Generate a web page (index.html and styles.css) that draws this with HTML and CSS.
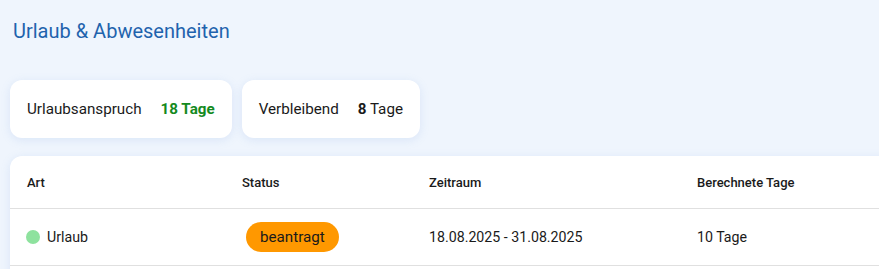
FILE: index.html
```html
<!DOCTYPE html>
<html lang="de">
<head>
<meta charset="utf-8">
<title>Urlaub &amp; Abwesenheiten</title>
<link rel="stylesheet" href="styles.css">
</head>
<body>
<main class="page">
  <h1 class="title">Urlaub &amp; Abwesenheiten</h1>
  <section class="stats">
    <div class="stat-card">
      <span class="stat-label">Urlaubsanspruch</span>
      <span class="stat-value stat-value--green">18 Tage</span>
    </div>
    <div class="stat-card">
      <span class="stat-label">Verbleibend</span>
      <span class="stat-value"><strong>8</strong> Tage</span>
    </div>
  </section>
  <section class="table-card">
    <div class="row row--head">
      <div class="cell">Art</div>
      <div class="cell">Status</div>
      <div class="cell">Zeitraum</div>
      <div class="cell">Berechnete Tage</div>
    </div>
    <div class="row">
      <div class="cell cell--type"><span class="dot"></span>Urlaub</div>
      <div class="cell"><span class="badge">beantragt</span></div>
      <div class="cell">18.08.2025 - 31.08.2025</div>
      <div class="cell">10 Tage</div>
    </div>
    <div class="row row--empty"></div>
  </section>
</main>
</body>
</html>
```

FILE: styles.css
```css
html, body {
  margin: 0;
  padding: 0;
  overflow: hidden;
}
body {
  background: #eff5fd;
  font-family: Roboto, "Liberation Sans", sans-serif;
  color: #1a1a1a;
}
.page {
  padding: 0 0 0 10px;
  width: 1000px;
}
.title {
  margin: 0;
  padding: 19px 0 0 3px;
  height: 80px;
  box-sizing: border-box;
  font-size: 20px;
  font-weight: 400;
  color: #1f63ad;
  line-height: 24px;
}
.stats {
  display: flex;
  gap: 10px;
  margin-bottom: 18px;
}
.stat-card {
  background: #fff;
  border-radius: 12px;
  height: 58px;
  padding: 0 17px;
  display: flex;
  align-items: center;
  gap: 19px;
  font-size: 15.2px;
  box-shadow: 0 2px 10px rgba(120, 160, 220, 0.18);
}
.stat-value strong { font-weight: 700; }
.stat-value--green {
  color: #148a1e;
  font-weight: 700;
}
.table-card {
  background: #fff;
  border-radius: 12px;
  box-shadow: 0 2px 10px rgba(120, 160, 220, 0.18);
}
.row {
  display: grid;
  grid-template-columns: 215px 187px 268px 1fr;
  height: 56px;
  align-items: center;
  border-bottom: 1px solid #e0e0e0;
  font-size: 14.2px;
}
.row--head {
  height: 52px;
  font-weight: 500;
  font-size: 13px;
}
.row--empty {
  border-bottom: 0;
}
.cell {
  padding-left: 17px;
}
.cell--type {
  display: flex;
  align-items: center;
  gap: 7px;
  padding-left: 16px;
}
.dot {
  width: 14px;
  height: 14px;
  border-radius: 50%;
  background: #8ee29e;
}
.badge {
  display: inline-block;
  margin-left: 4px;
  background: #ff9800;
  color: #1a1a1a;
  border-radius: 15px;
  height: 30px;
  line-height: 30px;
  padding: 0 14px;
  font-size: 15.2px;
}
```
